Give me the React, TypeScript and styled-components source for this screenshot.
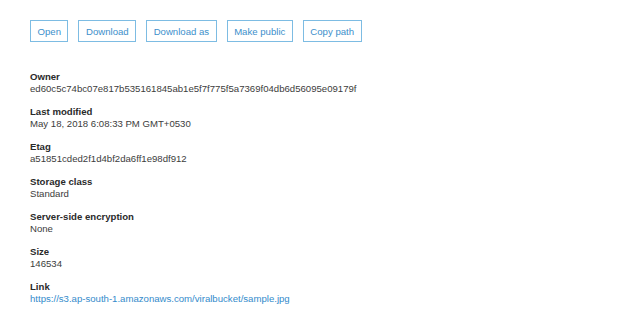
import styled, { createGlobalStyle } from "styled-components";

const GlobalStyle = createGlobalStyle`
  body {
    margin: 0;
    background: #ffffff;
    font-family: "Liberation Sans", Arial, sans-serif;
  }
`;

const actions = ["Open", "Download", "Download as", "Make public", "Copy path"];

const details = [
  { name: "Owner", value: "ed60c5c74bc07e817b535161845ab1e5f7f775f5a7369f04db6d56095e09179f" },
  { name: "Last modified", value: "May 18, 2018 6:08:33 PM GMT+0530" },
  { name: "Etag", value: "a51851cded2f1d4bf2da6ff1e98df912" },
  { name: "Storage class", value: "Standard" },
  { name: "Server-side encryption", value: "None" },
  { name: "Size", value: "146534" },
  { name: "Link", value: "https://s3.ap-south-1.amazonaws.com/viralbucket/sample.jpg", link: true },
];

const App = () => {
  return (
    <Main>
      <GlobalStyle />
      <Toolbar>
        {actions.map((a) => (
          <ActionButton key={a}>{a}</ActionButton>
        ))}
      </Toolbar>
      <Details>
        {details.map((d) => (
          <Item key={d.name}>
            <Label>{d.name}</Label>
            <Value $link={d.link}>{d.value}</Value>
          </Item>
        ))}
      </Details>
    </Main>
  );
};

export default App;

const Main = styled.div`
  display: flex;
  flex-direction: column;
  padding: 20px 30px;
  gap: 29px;
  color: #333333;
`;

const Toolbar = styled.div`
  display: flex;
  gap: 10px;
`;

const ActionButton = styled.button`
  font-family: "Liberation Sans", Arial, sans-serif;
  font-size: 9.6px;
  color: #3d8fcb;
  background: #ffffff;
  border: 1px solid #7dbce3;
  border-radius: 0;
  height: 22px;
  padding: 1px 6.5px 0;
  cursor: pointer;
`;

const Details = styled.div`
  display: flex;
  flex-direction: column;
  gap: 11px;
`;

const Item = styled.div`
  display: flex;
  flex-direction: column;
  font-size: 9.6px;
  line-height: 12px;
`;

const Label = styled.div`
  font-weight: 700;
  color: #2a2a2a;
`;

const Value = styled.div<{ $link?: boolean }>`
  color: ${({ $link }) => ($link ? "#348bcb" : "#3c3c3c")};
`;
